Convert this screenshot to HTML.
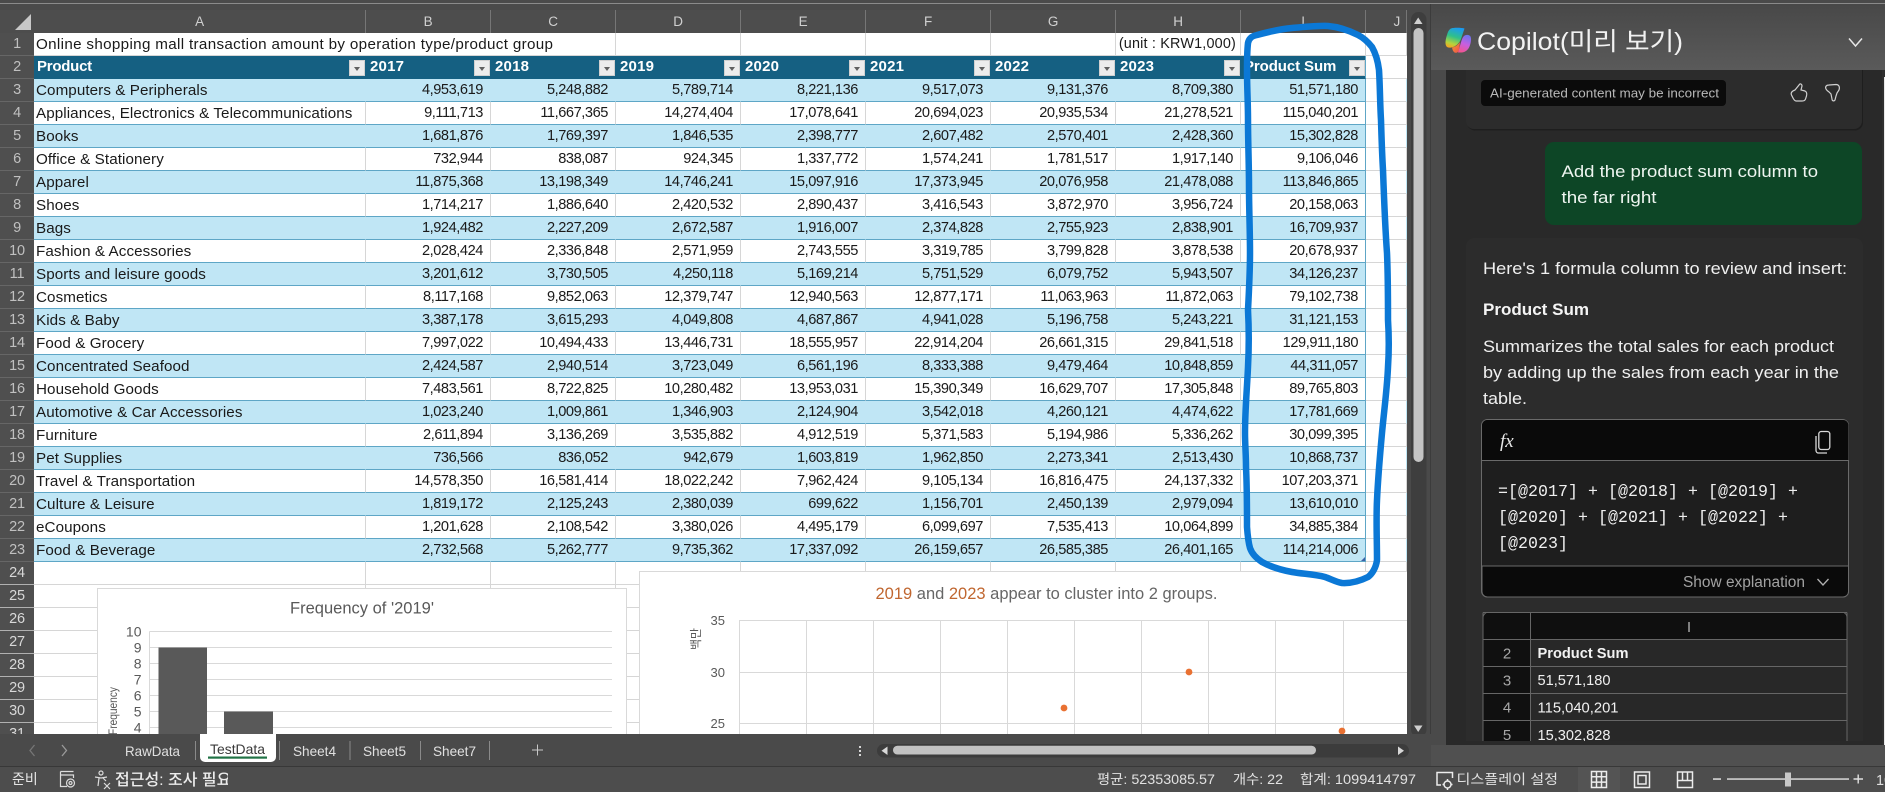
<!DOCTYPE html>
<html><head><meta charset="utf-8"><title>Excel Copilot</title>
<style>
html,body{margin:0;padding:0;width:1885px;height:792px;overflow:hidden;background:#4a4a4a}
#sheet{position:absolute;left:0;top:10px;width:1407px;height:724px;overflow:hidden;background:#fff}
table{border-collapse:separate;border-spacing:0;table-layout:fixed;width:1407px}
td,th{height:23px;box-sizing:border-box;padding:0 7px 0 0;overflow:hidden;white-space:nowrap;border-right:1px solid #d6d6d6;border-bottom:1px solid #d6d6d6;font:400 14.6px "Liberation Sans",sans-serif;letter-spacing:-.43px;color:#1a1a1a;text-align:right;background:#fff;line-height:22px}
th{background:#4f4f4f;color:#c0c0c0;text-align:center;padding:0;font-weight:400;border-right:0;border-bottom:1px solid #666;letter-spacing:-.2px;font-size:14.5px}
tr.ch th{background:#4d4d4d;color:#d0d0d0;border-right:1px solid #767676;border-bottom:0;height:23px;font-size:13.5px}
tr.lo th{border-bottom:1px solid #b0b0b0;color:#d8d8d8}
td.t{text-align:left;padding:2px 0 0 2px;font-size:15.2px;letter-spacing:.08px;line-height:20px}
td.o{letter-spacing:.33px}
td.u{padding-right:4px;letter-spacing:.18px;font-size:14.4px}
tr.b td{background:#c0e6f5;border-right-color:#c0e6f5;border-bottom-color:#5ea6c6}
tr.w td{border-bottom-color:#5ea6c6}
tr.b td.e,tr.w td.e,tr.h td.e{border-right:1px solid #5ea6c6}
tr.h td{background:#156082;color:#fff;font-weight:700;text-align:left;padding:0 0 0 4px;font-size:15px;letter-spacing:.2px;border-right-color:#156082;border-bottom-color:#156082;position:relative}
tr.h td.p{letter-spacing:-.25px;padding-left:3px}
tr.h td.s{letter-spacing:-.1px;padding-left:3px}
.f{position:absolute;right:0;top:4px;width:16px;height:16px;background:#ececec;border:1px solid #d0d0d0;box-sizing:border-box}
.f:after{content:"";position:absolute;left:4px;top:6px;border-left:3.5px solid transparent;border-right:3.5px solid transparent;border-top:4px solid #606060}
svg{position:absolute;left:0;top:0}
text{font-family:"Liberation Sans","Noto Sans CJK KR",sans-serif}
</style></head><body>
<div id="sheet"><table>
<colgroup><col style="width:34px"><col style="width:332px"><col style="width:125px"><col style="width:125px"><col style="width:125px"><col style="width:125px"><col style="width:125px"><col style="width:125px"><col style="width:125px"><col style="width:125px"><col style="width:41px"></colgroup>
<tr class="ch"><th></th><th>A</th><th>B</th><th>C</th><th>D</th><th>E</th><th>F</th><th>G</th><th>H</th><th>I</th><th style="text-align:right;padding-right:6px">J</th></tr>
<tr><th>1</th><td class="t o" colspan="3">Online shopping mall transaction amount by operation type/product group</td><td></td><td></td><td></td><td></td><td class="u">(unit : KRW1,000)</td><td></td><td></td></tr>
<tr class="h"><th>2</th><td class="p">Product<span class="f"></span></td><td>2017<span class="f"></span></td><td>2018<span class="f"></span></td><td>2019<span class="f"></span></td><td>2020<span class="f"></span></td><td>2021<span class="f"></span></td><td>2022<span class="f"></span></td><td>2023<span class="f"></span></td><td class="e s">Product Sum<span class="f"></span></td><td style="background:#fff;border-right:0;border-bottom-color:#d6d6d6"></td></tr>
<tr class="b"><th>3</th><td class="t">Computers &amp; Peripherals</td><td>4,953,619</td><td>5,248,882</td><td>5,789,714</td><td>8,221,136</td><td>9,517,073</td><td>9,131,376</td><td>8,709,380</td><td class="e">51,571,180</td><td style="background:#fff;border-bottom-color:#d6d6d6"></td></tr>
<tr class="w"><th>4</th><td class="t">Appliances, Electronics &amp; Telecommunications</td><td>9,111,713</td><td>11,667,365</td><td>14,274,404</td><td>17,078,641</td><td>20,694,023</td><td>20,935,534</td><td>21,278,521</td><td class="e">115,040,201</td><td style="border-bottom-color:#d6d6d6"></td></tr>
<tr class="b"><th>5</th><td class="t">Books</td><td>1,681,876</td><td>1,769,397</td><td>1,846,535</td><td>2,398,777</td><td>2,607,482</td><td>2,570,401</td><td>2,428,360</td><td class="e">15,302,828</td><td style="background:#fff;border-bottom-color:#d6d6d6"></td></tr>
<tr class="w"><th>6</th><td class="t">Office &amp; Stationery</td><td>732,944</td><td>838,087</td><td>924,345</td><td>1,337,772</td><td>1,574,241</td><td>1,781,517</td><td>1,917,140</td><td class="e">9,106,046</td><td style="border-bottom-color:#d6d6d6"></td></tr>
<tr class="b"><th>7</th><td class="t">Apparel</td><td>11,875,368</td><td>13,198,349</td><td>14,746,241</td><td>15,097,916</td><td>17,373,945</td><td>20,076,958</td><td>21,478,088</td><td class="e">113,846,865</td><td style="background:#fff;border-bottom-color:#d6d6d6"></td></tr>
<tr class="w"><th>8</th><td class="t">Shoes</td><td>1,714,217</td><td>1,886,640</td><td>2,420,532</td><td>2,890,437</td><td>3,416,543</td><td>3,872,970</td><td>3,956,724</td><td class="e">20,158,063</td><td style="border-bottom-color:#d6d6d6"></td></tr>
<tr class="b"><th>9</th><td class="t">Bags</td><td>1,924,482</td><td>2,227,209</td><td>2,672,587</td><td>1,916,007</td><td>2,374,828</td><td>2,755,923</td><td>2,838,901</td><td class="e">16,709,937</td><td style="background:#fff;border-bottom-color:#d6d6d6"></td></tr>
<tr class="w"><th>10</th><td class="t">Fashion &amp; Accessories</td><td>2,028,424</td><td>2,336,848</td><td>2,571,959</td><td>2,743,555</td><td>3,319,785</td><td>3,799,828</td><td>3,878,538</td><td class="e">20,678,937</td><td style="border-bottom-color:#d6d6d6"></td></tr>
<tr class="b"><th>11</th><td class="t">Sports and leisure goods</td><td>3,201,612</td><td>3,730,505</td><td>4,250,118</td><td>5,169,214</td><td>5,751,529</td><td>6,079,752</td><td>5,943,507</td><td class="e">34,126,237</td><td style="background:#fff;border-bottom-color:#d6d6d6"></td></tr>
<tr class="w"><th>12</th><td class="t">Cosmetics</td><td>8,117,168</td><td>9,852,063</td><td>12,379,747</td><td>12,940,563</td><td>12,877,171</td><td>11,063,963</td><td>11,872,063</td><td class="e">79,102,738</td><td style="border-bottom-color:#d6d6d6"></td></tr>
<tr class="b"><th>13</th><td class="t">Kids &amp; Baby</td><td>3,387,178</td><td>3,615,293</td><td>4,049,808</td><td>4,687,867</td><td>4,941,028</td><td>5,196,758</td><td>5,243,221</td><td class="e">31,121,153</td><td style="background:#fff;border-bottom-color:#d6d6d6"></td></tr>
<tr class="w"><th>14</th><td class="t">Food &amp; Grocery</td><td>7,997,022</td><td>10,494,433</td><td>13,446,731</td><td>18,555,957</td><td>22,914,204</td><td>26,661,315</td><td>29,841,518</td><td class="e">129,911,180</td><td style="border-bottom-color:#d6d6d6"></td></tr>
<tr class="b"><th>15</th><td class="t">Concentrated Seafood</td><td>2,424,587</td><td>2,940,514</td><td>3,723,049</td><td>6,561,196</td><td>8,333,388</td><td>9,479,464</td><td>10,848,859</td><td class="e">44,311,057</td><td style="background:#fff;border-bottom-color:#d6d6d6"></td></tr>
<tr class="w"><th>16</th><td class="t">Household Goods</td><td>7,483,561</td><td>8,722,825</td><td>10,280,482</td><td>13,953,031</td><td>15,390,349</td><td>16,629,707</td><td>17,305,848</td><td class="e">89,765,803</td><td style="border-bottom-color:#d6d6d6"></td></tr>
<tr class="b"><th>17</th><td class="t">Automotive &amp; Car Accessories</td><td>1,023,240</td><td>1,009,861</td><td>1,346,903</td><td>2,124,904</td><td>3,542,018</td><td>4,260,121</td><td>4,474,622</td><td class="e">17,781,669</td><td style="background:#fff;border-bottom-color:#d6d6d6"></td></tr>
<tr class="w"><th>18</th><td class="t">Furniture</td><td>2,611,894</td><td>3,136,269</td><td>3,535,882</td><td>4,912,519</td><td>5,371,583</td><td>5,194,986</td><td>5,336,262</td><td class="e">30,099,395</td><td style="border-bottom-color:#d6d6d6"></td></tr>
<tr class="b"><th>19</th><td class="t">Pet Supplies</td><td>736,566</td><td>836,052</td><td>942,679</td><td>1,603,819</td><td>1,962,850</td><td>2,273,341</td><td>2,513,430</td><td class="e">10,868,737</td><td style="background:#fff;border-bottom-color:#d6d6d6"></td></tr>
<tr class="w"><th>20</th><td class="t">Travel &amp; Transportation</td><td>14,578,350</td><td>16,581,414</td><td>18,022,242</td><td>7,962,424</td><td>9,105,134</td><td>16,816,475</td><td>24,137,332</td><td class="e">107,203,371</td><td style="border-bottom-color:#d6d6d6"></td></tr>
<tr class="b"><th>21</th><td class="t">Culture &amp; Leisure</td><td>1,819,172</td><td>2,125,243</td><td>2,380,039</td><td>699,622</td><td>1,156,701</td><td>2,450,139</td><td>2,979,094</td><td class="e">13,610,010</td><td style="background:#fff;border-bottom-color:#d6d6d6"></td></tr>
<tr class="w"><th>22</th><td class="t">eCoupons</td><td>1,201,628</td><td>2,108,542</td><td>3,380,026</td><td>4,495,179</td><td>6,099,697</td><td>7,535,413</td><td>10,064,899</td><td class="e">34,885,384</td><td style="border-bottom-color:#d6d6d6"></td></tr>
<tr class="b"><th>23</th><td class="t">Food &amp; Beverage</td><td>2,732,568</td><td>5,262,777</td><td>9,735,362</td><td>17,337,092</td><td>26,159,657</td><td>26,585,385</td><td>26,401,165</td><td class="e">114,214,006</td><td style="background:#fff;border-bottom-color:#d6d6d6"></td></tr>
<tr class="lo"><th>24</th><td></td><td></td><td></td><td></td><td></td><td></td><td></td><td></td><td></td><td></td></tr>
<tr class="lo"><th>25</th><td></td><td></td><td></td><td></td><td></td><td></td><td></td><td></td><td></td><td></td></tr>
<tr class="lo"><th>26</th><td></td><td></td><td></td><td></td><td></td><td></td><td></td><td></td><td></td><td></td></tr>
<tr class="lo"><th>27</th><td></td><td></td><td></td><td></td><td></td><td></td><td></td><td></td><td></td><td></td></tr>
<tr class="lo"><th>28</th><td></td><td></td><td></td><td></td><td></td><td></td><td></td><td></td><td></td><td></td></tr>
<tr class="lo"><th>29</th><td></td><td></td><td></td><td></td><td></td><td></td><td></td><td></td><td></td><td></td></tr>
<tr class="lo"><th>30</th><td></td><td></td><td></td><td></td><td></td><td></td><td></td><td></td><td></td><td></td></tr>
<tr class="lo"><th>31</th><td></td><td></td><td></td><td></td><td></td><td></td><td></td><td></td><td></td><td></td></tr>
</table></div>

<svg width="1885" height="792" viewBox="0 0 1885 792" xmlns="http://www.w3.org/2000/svg">
<defs>
<linearGradient id="hd" x1="0" y1="0" x2="0" y2="1"><stop offset="0" stop-color="#484848"/><stop offset="1" stop-color="#5a5a5a"/></linearGradient>
<linearGradient id="lg1" x1="0.6" y1="0" x2="0.3" y2="1"><stop offset="0" stop-color="#1b9bf0"/><stop offset=".45" stop-color="#2fc08a"/><stop offset=".8" stop-color="#b5d33c"/><stop offset="1" stop-color="#f5a623"/></linearGradient>
<linearGradient id="lg2" x1="0.6" y1="0" x2="0.3" y2="1"><stop offset="0" stop-color="#6f74f0"/><stop offset=".5" stop-color="#c75fe0"/><stop offset="1" stop-color="#f2558f"/></linearGradient>
<linearGradient id="lg3" x1="0" y1="0" x2="1" y2="1"><stop offset="0" stop-color="#f59a2b"/><stop offset="1" stop-color="#ee4f4f"/></linearGradient>
<clipPath id="pc"><rect x="1446" y="70" width="439" height="671"/></clipPath>
<clipPath id="ac"><rect x="110" y="767" width="118" height="25"/></clipPath>
</defs>

<!-- top line -->
<rect x="0" y="0" width="1885" height="10" fill="#4a4a4a"/>
<rect x="0" y="3" width="1885" height="1" fill="#8a8a8a"/>
<rect x="0" y="10" width="34" height="23" fill="#4d4d4d"/>
<path d="M31 14 V30 H15 Z" fill="#c8c8c8"/>

<!-- chart 1 -->
<rect x="97.5" y="588.5" width="529" height="160" fill="#fff" stroke="#d9d9d9"/>
<text x="362" y="613.5" font-size="16.5" fill="#595959" text-anchor="middle" textLength="144" lengthAdjust="spacingAndGlyphs">Frequency of '2019'</text>
<g stroke="#d9d9d9" stroke-width="1">
<path d="M149.5 631.5H612M149.5 647.5H612M149.5 663.5H612M149.5 679.5H612M149.5 695.5H612M149.5 711.5H612M149.5 727.5H612"/>
<path d="M149.5 631.5V740"/>
</g>
<g font-size="14" fill="#595959" text-anchor="end">
<text x="141.5" y="636.5">10</text><text x="141.5" y="652.5">9</text><text x="141.5" y="668.5">8</text><text x="141.5" y="684.5">7</text><text x="141.5" y="700.5">6</text><text x="141.5" y="716.5">5</text><text x="141.5" y="732.5">4</text>
</g>
<rect x="158.5" y="647.5" width="48.5" height="100" fill="#595959"/>
<rect x="224" y="711.5" width="49" height="40" fill="#595959"/>
<text transform="translate(117,735) rotate(-90)" font-size="11.5" fill="#595959" textLength="48" lengthAdjust="spacingAndGlyphs">Frequency</text>

<!-- chart 2 -->
<rect x="639.5" y="571.5" width="780" height="180" fill="#fff" stroke="#d9d9d9"/>
<text x="875.5" y="599" font-size="16.5" fill="#666" textLength="342" lengthAdjust="spacingAndGlyphs"><tspan fill="#c0662f">2019</tspan> and <tspan fill="#c0662f">2023</tspan> appear to cluster into 2 groups.</text>
<g stroke="#d9d9d9" stroke-width="1">
<path d="M739.5 620.5H1410M739.5 672.5H1410M739.5 723.5H1410"/>
<path d="M739.5 620V740M806.5 620V740M873.5 620V740M940.5 620V740M1007.5 620V740M1074.5 620V740M1141.5 620V740M1208.5 620V740M1275.5 620V740M1343.5 620V740"/>
</g>
<g font-size="13" fill="#595959" text-anchor="end">
<text x="725" y="625">35</text><text x="725" y="677">30</text><text x="725" y="728">25</text>
</g>
<text transform="translate(700,650) rotate(-90)" font-size="12" fill="#595959">백만</text>
<g fill="#e97132"><ellipse cx="1064" cy="708" rx="3.4" ry="3.4"/><ellipse cx="1189" cy="672" rx="3.4" ry="3.4"/><ellipse cx="1342" cy="731" rx="3.4" ry="3.4"/></g>

<!-- table resize handle -->
<path d="M1365 557V561H1361Z" fill="#3c62a8"/>

<!-- right side chrome -->
<rect x="1407" y="10" width="478" height="724" fill="#4a4a4a"/>
<rect x="1431" y="4" width="454" height="66" fill="url(#hd)"/>
<rect x="1430" y="4" width="1" height="762" fill="#3c3c3c"/>

<!-- v scrollbar -->
<rect x="1411" y="12" width="15.5" height="725" rx="7.5" fill="#3e3e3e"/>
<path d="M1414 24H1422.5L1418.2 17.5Z" fill="#cfcfcf"/>
<rect x="1413.5" y="28" width="10" height="434" rx="5" fill="#c4c4c4"/>
<path d="M1414 725.5H1422.5L1418.2 732Z" fill="#cfcfcf"/>

<!-- tab bar -->
<rect x="0" y="734" width="1431" height="32" fill="#4a4a4a"/>
<rect x="1431" y="734" width="454" height="32" fill="#4a4a4a"/>

<!-- copilot pane -->
<rect x="1446" y="70" width="439" height="675" fill="#292929"/>
<rect x="1882" y="70" width="3" height="675" fill="#2f2f2f"/>
<rect x="1884" y="77" width="1" height="668" fill="#e8e8e8"/>

<text x="1477" y="50" font-size="25" fill="#f2f2f2" textLength="206" lengthAdjust="spacingAndGlyphs">Copilot(미리 보기)</text>
<path d="M1849 38.5L1855.5 46L1862 38.5" fill="none" stroke="#e6e6e6" stroke-width="1.5"/>
<!-- logo -->
<path d="M1451 28.5C1453 27.5 1461 27.5 1464.5 28.5L1461 39C1459.5 43 1456 46.5 1451.5 47.5C1449 48 1446.5 47.5 1445.8 45C1445 42 1446 38 1447 35C1448 31.5 1449 29.5 1451 28.5Z" fill="url(#lg1)"/>
<path d="M1464 36C1466 34.5 1469 34.5 1470.5 36.5C1471.5 38.5 1471 43 1469.5 46.5C1468 50 1465.5 52 1462 52.5L1458 52.5L1460.5 44C1461.5 41 1462 38 1464 36Z" fill="url(#lg2)"/>
<path d="M1452 47.5C1455 47 1458 45 1460 42L1459 50C1458.5 52 1457 53 1455.5 52.8C1453.5 52.5 1452.5 50 1452 47.5Z" fill="url(#lg3)"/>

<g clip-path="url(#pc)">
<!-- card 1 -->
<rect x="1467" y="40" width="396" height="90.5" rx="8" fill="#1e1e1e"/>
<rect x="1466" y="40" width="396" height="89" rx="8" fill="#2c2c2c"/>
<rect x="1481" y="80" width="245" height="26" rx="4" fill="#0b0b0b"/>
<text x="1490" y="97.5" font-size="13" fill="#b9b9b9" textLength="229" lengthAdjust="spacingAndGlyphs">AI-generated content may be incorrect</text>
<path d="M1792 96C1790 93 1792 91 1795 90L1799 85C1800 83 1802 84 1802 86L1801 90L1805 91C1807 92 1807 94 1806.5 96L1805.5 99C1805 101 1803 101 1802 101L1796 101C1794 101 1793 98 1792 96Z" fill="none" stroke="#d0d0d0" stroke-width="1.2"/>
<path d="M1826 89C1825 87 1826 85 1829 85L1836 84.5C1839 84.5 1840 87 1839 90L1837 93L1836 96L1835 100C1834 101.5 1832 101 1832 99L1831 94L1829 92C1827.5 91 1826.5 90 1826 89Z" fill="none" stroke="#d0d0d0" stroke-width="1.2"/>

<!-- bubble -->
<rect x="1545" y="142" width="317" height="83" rx="9" fill="#0d4626"/>
<text x="1561.5" y="177" font-size="16.5" fill="#eef5f0" textLength="256.5" lengthAdjust="spacingAndGlyphs">Add the product sum column to</text>
<text x="1561.5" y="203" font-size="16.5" fill="#eef5f0" textLength="95" lengthAdjust="spacingAndGlyphs">the far right</text>

<!-- card 2 -->
<rect x="1466" y="238" width="397" height="540" rx="8" fill="#2c2c2c"/>
<text x="1483" y="274" font-size="16.5" fill="#f0f0f0" textLength="364" lengthAdjust="spacingAndGlyphs">Here's 1 formula column to review and insert:</text>
<text x="1483" y="315" font-size="16.5" font-weight="700" fill="#f4f4f4" textLength="106" lengthAdjust="spacingAndGlyphs">Product Sum</text>
<text x="1483" y="352" font-size="16.5" fill="#f0f0f0" textLength="351" lengthAdjust="spacingAndGlyphs">Summarizes the total sales for each product</text>
<text x="1483" y="378" font-size="16.5" fill="#f0f0f0" textLength="356" lengthAdjust="spacingAndGlyphs">by adding up the sales from each year in the</text>
<text x="1483" y="404" font-size="16.5" fill="#f0f0f0" textLength="44" lengthAdjust="spacingAndGlyphs">table.</text>

<!-- code box -->
<rect x="1481.5" y="419.5" width="367" height="177.5" rx="6" fill="#1e1e1e" stroke="#6a6a6a"/>
<path d="M1482 460V425.5a5.5 5.5 0 0 1 5.5-5.5H1843a5.5 5.5 0 0 1 5.5 5.5V460Z" fill="#0a0a0a"/>
<rect x="1481.5" y="460" width="367" height="1" fill="#6a6a6a"/>
<text x="1500" y="447" font-size="19" font-style="italic" fill="#e8e8e8" style="font-family:'Liberation Serif',serif">fx</text>
<path d="M1816 436V450.5a2.5 2.5 0 0 0 2.5 2.5H1827" fill="none" stroke="#d8d8d8" stroke-width="1.3"/>
<rect x="1818.8" y="431.5" width="11" height="18" rx="2.5" fill="none" stroke="#d8d8d8" stroke-width="1.3"/>
<g font-size="16.6" fill="#efefef">
<text x="1498" y="496" style="font-family:'Liberation Mono',monospace" font-size="16.6" textLength="300">=[@2017] + [@2018] + [@2019] +</text>
<text x="1498" y="522" style="font-family:'Liberation Mono',monospace" font-size="16.6" textLength="290">[@2020] + [@2021] + [@2022] +</text>
<text x="1498" y="548" style="font-family:'Liberation Mono',monospace" font-size="16.6" textLength="70">[@2023]</text>
</g>
<path d="M1482 566H1848.5V591.5a5.5 5.5 0 0 1-5.5 5.5H1487.5a5.5 5.5 0 0 1-5.5-5.5Z" fill="#0a0a0a" stroke="#6a6a6a"/>
<text x="1683" y="587" font-size="15.5" fill="#a2a2a2" textLength="122" lengthAdjust="spacingAndGlyphs">Show explanation</text>
<path d="M1817.5 579L1823 585L1828.5 579" fill="none" stroke="#b0b0b0" stroke-width="1.3"/>

<!-- preview table -->
<path d="M1483 760V618a5.5 5.5 0 0 1 5.5-5.5H1842a5 5 0 0 1 5 5V760Z" fill="#282828" stroke="#666"/>
<path d="M1483.5 618a5.5 5.5 0 0 1 5.5-5.5H1842a5 5 0 0 1 4.5 5V639H1483.5Z" fill="#0f0f0f"/>
<rect x="1483.5" y="639" width="47" height="110" fill="#101010"/>
<g stroke="#666" stroke-width="1">
<path d="M1530.5 612.5V750M1483 639.5H1847M1483 666.5H1847M1483 693.5H1847M1483 720.5H1847M1483 612.5H1847M1483 612.5V750M1847 612.5V750"/>
</g>
<text x="1689" y="632" font-size="14.5" fill="#b0b0b0" text-anchor="middle">I</text>
<g font-size="15" fill="#a8a8a8" text-anchor="middle">
<text x="1507" y="658.5">2</text><text x="1507" y="685.5">3</text><text x="1507" y="712.5">4</text><text x="1507" y="740">5</text>
</g>
<text x="1537.5" y="658" font-size="15" font-weight="700" fill="#f2f2f2" textLength="91" lengthAdjust="spacingAndGlyphs">Product Sum</text>
<text x="1537.5" y="685" font-size="15" fill="#f0f0f0" textLength="73" lengthAdjust="spacingAndGlyphs">51,571,180</text>
<text x="1537.5" y="712.5" font-size="15" fill="#f0f0f0" textLength="81" lengthAdjust="spacingAndGlyphs">115,040,201</text>
<text x="1537.5" y="740" font-size="15" fill="#f0f0f0" textLength="73" lengthAdjust="spacingAndGlyphs">15,302,828</text>
</g>

<!-- blue ink -->
<path d="M1248 43C1249 38 1252 36 1257 35C1268 32 1280 29 1292 28C1304 27 1318 25.5 1328 26C1340 27 1350 31 1358 35C1364 38 1368 42 1372 47C1376 54 1378 62 1379 70C1380 86 1380 104 1381 120C1381.5 137 1382 154 1383 170C1384 198 1385 226 1387 253C1388 276 1388 298 1388 320C1389 336 1389 352 1388 367C1387 390 1384 411 1382 433C1380 455 1378 478 1377 500C1376 520 1377 540 1377 560C1376 568 1372 574 1368 577C1360 581 1351 583.5 1342 583C1336 582 1331 579 1325 577C1314 574 1303 574 1292 572C1281 570 1271 567 1262 562C1256 558 1252 554 1250 548C1248 541 1247.5 534 1247 527C1247 507 1247 487 1246 467C1246 455 1245 444 1245 433C1245 411 1247 389 1248 367C1249 348 1249 329 1248 310C1249 291 1250 272 1250 253C1250 231 1249 209 1249 187C1249 165 1248 142 1248 120C1248 103 1247 87 1247 70C1247 61 1247 52 1248 43Z" fill="none" stroke="#0b78d6" stroke-width="6.5" stroke-linejoin="round"/>

<!-- tabs -->
<path d="M34.5 745L30 750.5L34.5 756" fill="none" stroke="#767676" stroke-width="1.3"/>
<path d="M62 745L66.5 750.5L62 756" fill="none" stroke="#9a9a9a" stroke-width="1.3"/>
<text x="125" y="756" font-size="14" fill="#e0e0e0" textLength="55" lengthAdjust="spacingAndGlyphs">RawData</text>
<rect x="195" y="741" width="1" height="19" fill="#8a8a8a"/>
<path d="M200 734H276V757a5 5 0 0 1-5 5H205a5 5 0 0 1-5-5Z" fill="#fff"/>
<text x="210" y="754" font-size="14" fill="#3a3a3a" textLength="55" lengthAdjust="spacingAndGlyphs">TestData</text>
<rect x="208" y="756.5" width="59" height="2.2" fill="#217346"/>
<rect x="279" y="741" width="1" height="19" fill="#8a8a8a"/>
<text x="293" y="756" font-size="14" fill="#e0e0e0" textLength="43" lengthAdjust="spacingAndGlyphs">Sheet4</text>
<rect x="349.5" y="741" width="1" height="19" fill="#8a8a8a"/>
<text x="363" y="756" font-size="14" fill="#e0e0e0" textLength="43" lengthAdjust="spacingAndGlyphs">Sheet5</text>
<rect x="420" y="741" width="1" height="19" fill="#8a8a8a"/>
<text x="433" y="756" font-size="14" fill="#e0e0e0" textLength="43" lengthAdjust="spacingAndGlyphs">Sheet7</text>
<rect x="489" y="741" width="1" height="19" fill="#8a8a8a"/>
<path d="M537.5 744.5V755.5M532 750H543" stroke="#c8c8c8" stroke-width="1"/>
<g fill="#d8d8d8"><rect x="859" y="746" width="2" height="2"/><rect x="859" y="750" width="2" height="2"/><rect x="859" y="754" width="2" height="2"/></g>
<rect x="877" y="744" width="532" height="13.5" rx="6.7" fill="#3c3c3c"/>
<path d="M887.5 746.5V755L881.5 750.8Z" fill="#d8d8d8"/>
<rect x="893" y="745.7" width="423" height="8.8" rx="4.4" fill="#c2c2c2"/>
<path d="M1398 746.5V755L1404 750.8Z" fill="#d8d8d8"/>

<!-- status bar -->
<rect x="0" y="766" width="1885" height="26" fill="#4d4d4d"/>
<rect x="0" y="766" width="1885" height="1" fill="#383838"/>
<rect x="1431" y="745" width="454" height="21" fill="#505050"/>
<rect x="1578" y="767" width="42" height="25" fill="#545454"/>
<text x="12" y="784" font-size="14" fill="#e6e6e6">준비</text>
<g fill="none" stroke="#dcdcdc" stroke-width="1.2">
<path d="M60.5 771.5H73.5M60.5 771.5V786.5H67M60.5 775H73.5V778"/>
<circle cx="70.5" cy="783" r="4"/>
<circle cx="70.5" cy="783" r="1.5"/>
<circle cx="101" cy="773" r="2"/>
<path d="M95 777L101 778L107 777M99 778L98 786M103 778L106 781"/>
<path d="M104 783L110 789M110 783L104 789"/>
</g>
<g clip-path="url(#ac)"><text x="115" y="785" font-size="16" font-weight="500" fill="#ececec">접근성: 조사 필요</text></g>
<text x="1097" y="784" font-size="13.5" fill="#e2e2e2" textLength="118" lengthAdjust="spacingAndGlyphs">평균: 52353085.57</text>
<text x="1233" y="784" font-size="13.5" fill="#e2e2e2" textLength="50" lengthAdjust="spacingAndGlyphs">개수: 22</text>
<text x="1300" y="784" font-size="13.5" fill="#e2e2e2" textLength="116" lengthAdjust="spacingAndGlyphs">합계: 1099414797</text>
<g fill="none" stroke="#ececec" stroke-width="1.5">
<path d="M1441 785H1437V772.5H1452.5V778"/>
<circle cx="1447.5" cy="784.5" r="3.5"/>
<path d="M1447.5 779V781M1447.500 788V790M1442.5 784.5H1444M1451 784.5H1452.5"/>
<path d="M1591.500 771.500H1606.500V787.500H1591.500ZM1591.500 776.800H1606.500M1591.500 782.100H1606.500M1596.500 771.500V787.500M1601.500 771.500V787.500"/>
<path d="M1634.500 772H1649.500V787.500H1634.500Z"/>
<path d="M1638 775.500H1646V784H1638Z"/>
<path d="M1677.500 772H1692.500V787.500H1677.500ZM1677.500 780.500H1692.500"/>
<path d="M1682.500 772V780.500M1687.500 772V780.500"/>
</g>
<rect x="1713" y="778.3" width="8" height="1.5" fill="#e0e0e0"/>
<rect x="1727" y="778.3" width="122" height="1.5" fill="#d8d8d8"/>
<rect x="1785" y="772.5" width="6" height="14" fill="#c8c8c8"/>
<path d="M1853.5 779H1863M1858.2 774.5V783.5" stroke="#e0e0e0" stroke-width="1.4"/>
<text x="1876" y="785" font-size="14.5" fill="#e0e0e0">100%</text>
<text x="1456.5" y="784" font-size="13.5" fill="#e2e2e2" textLength="101.5" lengthAdjust="spacingAndGlyphs">디스플레이 설정</text>
</svg>
</body></html>
